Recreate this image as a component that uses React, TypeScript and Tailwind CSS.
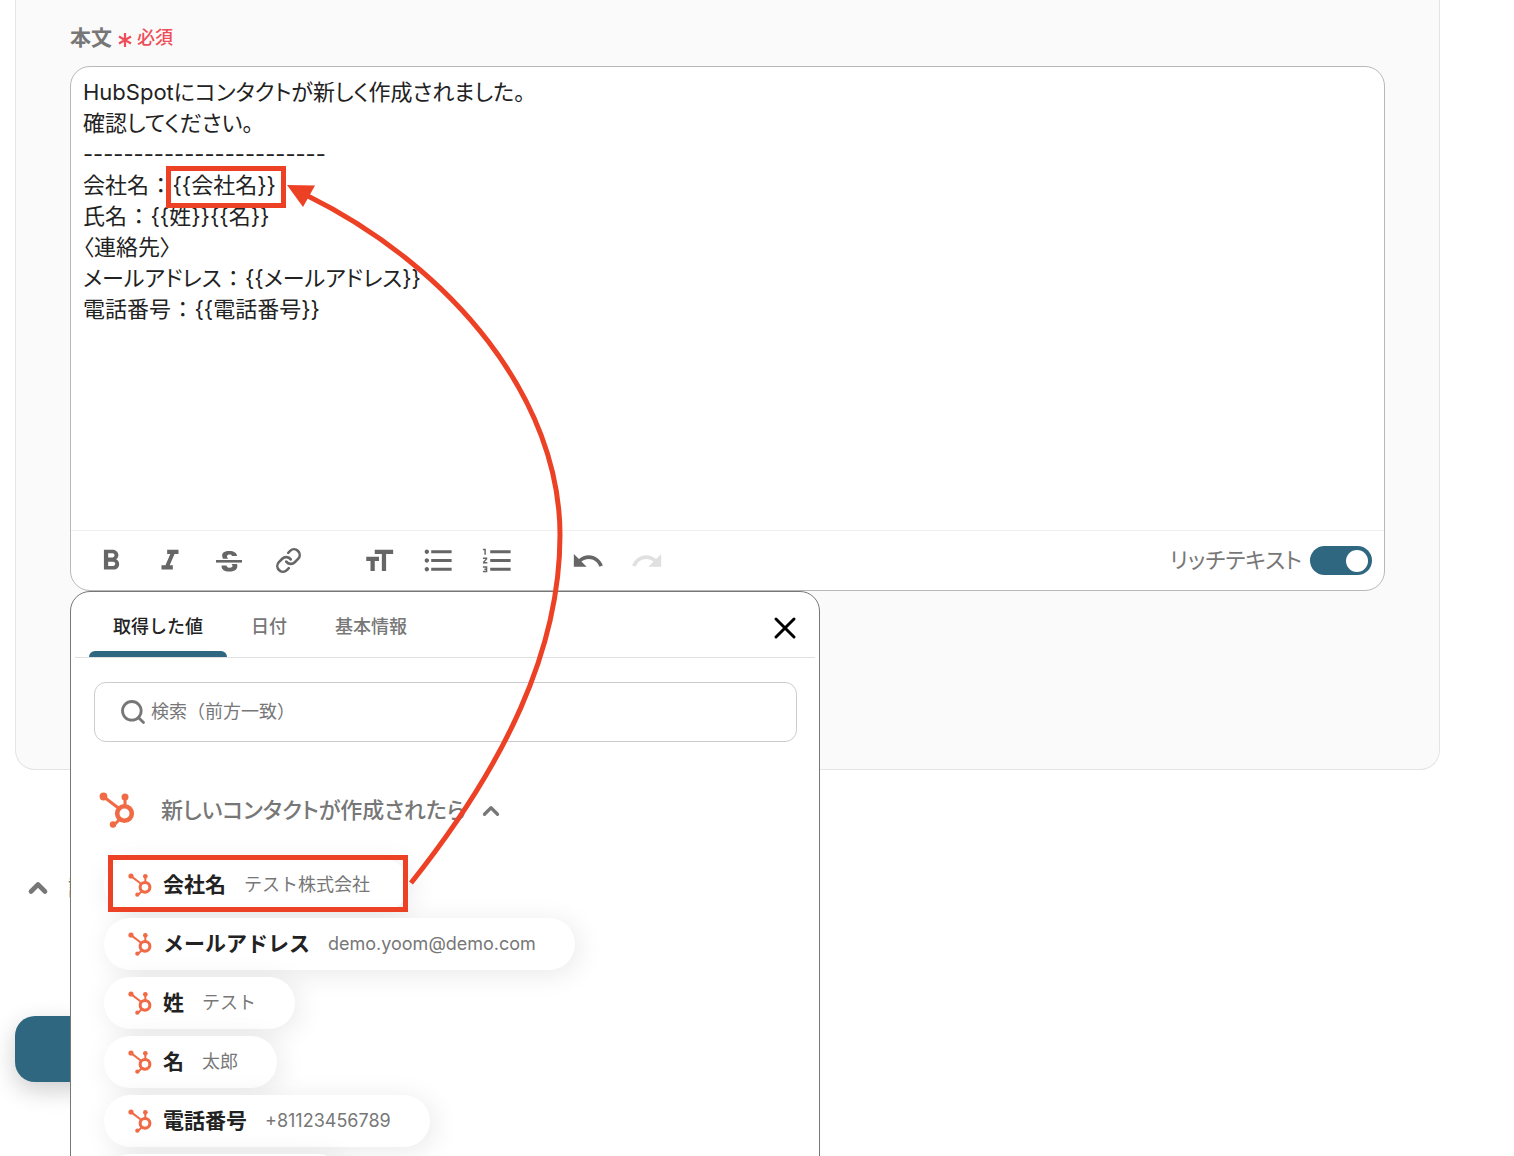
import React, { useState } from 'react';
import { MdFormatBold, MdFormatItalic, MdFormatListBulleted, MdFormatListNumbered, MdFormatSize, MdUndo, MdRedo } from 'react-icons/md';
import { ChevronUp, Link, Search, X } from 'lucide-react';

const bodyText = `HubSpotにコンタクトが新しく作成されました。
確認してください。
------------------------
会社名 ： {{会社名}}
氏名 ： {{姓}}{{名}}
〈連絡先〉
メールアドレス ： {{メールアドレス}}
電話番号 ： {{電話番号}}`;

const tabs = ['取得した値', '日付', '基本情報'];

const values = [
  { name: '会社名', value: 'テスト株式会社' },
  { name: 'メールアドレス', value: 'demo.yoom@demo.com' },
  { name: '姓', value: 'テスト' },
  { name: '名', value: '太郎' },
  { name: '電話番号', value: '+81123456789' },
];

const HubSpotLogo = ({ className }: { className: string }) => (
  <svg viewBox="0 0 36 36" className={className} aria-hidden="true">
    <g stroke="#f06a45" fill="none">
      <path d="M5 5L20 16.500M26 5v10M21 27l-7 7" strokeWidth="3" />
      <circle cx="25.500" cy="21.500" r="7.300" strokeWidth="4.600" />
    </g>
    <g fill="#f06a45">
      <circle cx="4.500" cy="4.500" r="3.900" />
      <circle cx="26" cy="5" r="3.500" />
      <circle cx="14" cy="32.500" r="3.200" />
    </g>
  </svg>
);

const StrikeIcon = () => (
  <svg viewBox="0 0 26 22" className="h-[22px] w-[26px]" fill="currentColor" aria-hidden="true">
    <path d="M0 10h26v2.600H0z" />
    <path d="M21 6h-5c-.5-2-5-2-5 .5c0 1 .5 1.500 1.500 2.200H7C4.500 3 8 1 13 1s8 2 8 5z" />
    <path d="M5.500 15.500h5c.3 3 6 3 6 .6c0-.8-.3-1.500-1-2.100h5.500C22.500 19 19 21.500 13.500 21.500S5.500 19.500 5.500 15.500z" />
  </svg>
);

const ToolButton = ({ label, disabled, children }: { label: string; disabled?: boolean; children: React.ReactNode }) => (
  <button type="button" aria-label={label} disabled={disabled} className="flex h-9 w-9 items-center justify-center text-[#666] disabled:text-[#e0e0e0]">
    {children}
  </button>
);

const App = () => {
  const [text, setText] = useState(bodyText);
  const [rich, setRich] = useState(true);
  const [activeTab, setActiveTab] = useState(tabs[0]);
  const [query, setQuery] = useState('');

  return (
    <div className="relative min-h-screen overflow-hidden bg-white font-['Inter','Noto_Sans_CJK_JP',sans-serif] text-[#222]">
      <section className="mr-[74px] ml-[15px] rounded-b-[20px] border border-t-0 border-[#e4e4e4] bg-[#fafafa] px-[54px] pt-[22px] pb-[178px]">
        <label htmlFor="body" className="flex h-8 items-center gap-[5px]">
          <span className="text-[21px] font-bold text-[#777]">本文</span>
          <span className="flex items-center gap-1 text-lg font-medium text-[#ee4e58]">
            <svg viewBox="0 0 16 16" className="mt-1 h-4 w-4" stroke="currentColor" strokeWidth="2.200" aria-hidden="true">
              <path d="M8 1v14M2 4.500l12 7M14 4.500l-12 7" />
            </svg>
            必須
          </span>
        </label>

        <div className="relative mt-3">
          <div className="rounded-[20px] border border-[#b8b8b8] bg-white">
            <textarea
              id="body"
              value={text}
              onChange={(e) => setText(e.target.value)}
              className="block h-[463px] w-full resize-none rounded-t-[20px] px-3 pt-[10px] text-[22px] leading-[31px] outline-none [font-feature-settings:'palt']"
            />
            <div className="flex h-[60px] items-center justify-between border-t border-[#f0f0f0] pr-3 pl-[22px]">
              <div className="flex gap-[23px]">
                <ToolButton label="太字"><MdFormatBold size={34} /></ToolButton>
                <ToolButton label="斜体"><MdFormatItalic size={34} /></ToolButton>
                <ToolButton label="取り消し線"><StrikeIcon /></ToolButton>
                <ToolButton label="リンク"><Link size={27} strokeWidth={2.3} /></ToolButton>
                <div className="ml-8"><ToolButton label="文字サイズ"><MdFormatSize size={34} /></ToolButton></div>
                <ToolButton label="箇条書き"><MdFormatListBulleted size={35} /></ToolButton>
                <ToolButton label="番号付きリスト"><MdFormatListNumbered size={35} /></ToolButton>
                <div className="ml-8"><ToolButton label="元に戻す"><MdUndo size={34} /></ToolButton></div>
                <ToolButton label="やり直す" disabled><MdRedo size={34} /></ToolButton>
              </div>
              <label className="flex items-center gap-2 text-[22px] text-[#777] [font-feature-settings:'palt']">
                リッチテキスト
                <input type="checkbox" role="switch" checked={rich} onChange={(e) => setRich(e.target.checked)} className="peer sr-only" />
                <span className="flex h-[29px] w-[62px] items-center rounded-full bg-gray-300 px-1 peer-checked:justify-end peer-checked:bg-[#2f6780]">
                  <span className="h-[22px] w-[22px] rounded-full bg-white" />
                </span>
              </label>
            </div>
          </div>

          <div className="absolute top-full left-0 z-10 w-[750px] rounded-t-[20px] border border-[#777] bg-white">
            <div className="mx-1 flex h-[66px] items-stretch border-b border-[#e0e0e0] pl-[14px]">
              {tabs.map((tab) => (
                <button
                  key={tab}
                  type="button"
                  onClick={() => setActiveTab(tab)}
                  className={`relative px-6 pt-1 text-lg font-medium ${tab === activeTab ? 'text-[#222]' : 'text-[#777]'}`}
                >
                  {tab}
                  {tab === activeTab && <span className="absolute inset-x-0 bottom-0 h-[6px] rounded-t-md bg-[#2f6780]" />}
                </button>
              ))}
              <button type="button" aria-label="閉じる" className="mr-3 ml-auto pt-[6px] text-black">
                <X size={36} strokeWidth={2} />
              </button>
            </div>

            <div className="pt-6 pr-[22px] pl-[23px]">
              <label className="flex h-[60px] items-center gap-1 rounded-xl border border-[#ccc] px-6 text-[#777]">
                <Search size={28} strokeWidth={2.4} />
                <input
                  type="text"
                  aria-label="検索"
                  value={query}
                  onChange={(e) => setQuery(e.target.value)}
                  placeholder="検索（前方一致）"
                  className="flex-1 text-lg outline-none placeholder:text-[#777]"
                />
              </label>

              <button type="button" className="mt-[49px] flex h-[38px] items-center pl-[5px] text-[#777]">
                <HubSpotLogo className="h-9 w-9" />
                <span className="ml-[26px] text-[22px] font-medium [font-feature-settings:'palt']">新しいコンタクトが作成されたら</span>
                <ChevronUp size={26} strokeWidth={3} className="mt-[2px] ml-3" />
              </button>

              <ul className="mt-[30px] flex flex-col items-start gap-[7px] pl-[10px]">
                {values.map((item) => (
                  <li key={item.name}>
                    <button type="button" className="flex h-[52px] items-center rounded-full bg-white pr-[39px] pl-6 shadow-[4px_4px_28px_rgba(0,0,0,0.09)]">
                      <HubSpotLogo className="h-6 w-6" />
                      <span className="ml-[11px] text-[21px] font-bold">{item.name}</span>
                      <span className="ml-[18px] text-lg text-[#777]">{item.value}</span>
                    </button>
                  </li>
                ))}
                <li className="h-[52px] w-[240px] rounded-full bg-white shadow-[4px_4px_28px_rgba(0,0,0,0.09)]" />
              </ul>
            </div>
          </div>
        </div>
      </section>

      <button type="button" className="mt-[102px] ml-6 flex items-center gap-4 text-[#777]">
        <ChevronUp size={28} strokeWidth={4} />
        <span className="text-[21px] font-medium">詳細設定</span>
      </button>
      <button type="button" aria-label="保存" className="mt-28 ml-[15px] block h-[66px] w-[200px] rounded-[20px] bg-[#2f6780] shadow-[0_8px_24px_rgba(0,0,0,0.2)]" />

      {/* annotations */}
      <svg width="600" height="920" className="pointer-events-none absolute top-0 left-0 z-20" fill="none" stroke="#ec4125" strokeWidth="5" aria-hidden="true">
        <rect x="168.500" y="168.500" width="115" height="37" />
        <rect x="110.500" y="857.500" width="295" height="52" />
        <path d="M411 883C505 765 560 650 560 535C560 400 454 268 306 195" />
        <path d="M287 185L315 185.500L303 207z" fill="#ec4125" stroke="none" />
      </svg>
    </div>
  );
};

export default App;
